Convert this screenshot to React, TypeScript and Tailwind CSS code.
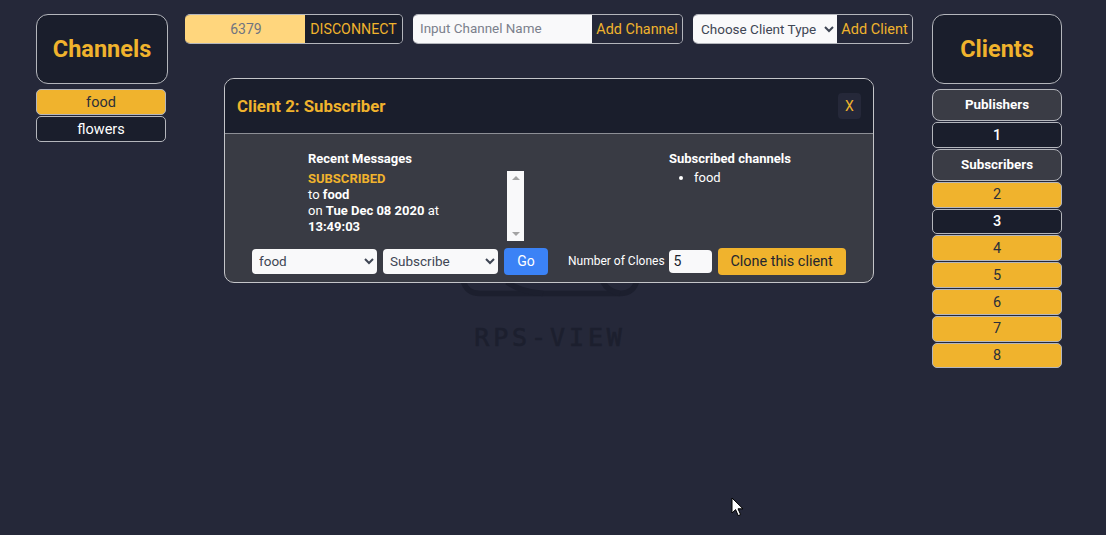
const panelBorder = 'border border-[#b4b6bc]';

const ListRow = ({name, active}: {name: string; active?: boolean}) => (
  <div
    className={`rounded-[5px] ${panelBorder} pt-[1px] flex items-center justify-center text-[14.5px] ${
      active ? 'bg-[#f0b32d] text-[#2b2f3a]' : 'bg-[#1a1e2c] text-white font-medium'
    } h-[25.8px]`}
  >
    {name}
  </div>
);

const GroupLabel = ({name}: {name: string}) => (
  <div className={`h-[32px] rounded-[8px] ${panelBorder} bg-[#3a3c45] text-white font-bold text-[13.4px] flex items-center justify-center`}>
    {name}
  </div>
);

const Title = ({text, className}: {text: string; className: string}) => (
  <div className={`h-[70px] rounded-[12px] ${panelBorder} bg-[#1a1e2c] text-[#f0b32d] font-bold text-[23.5px] pt-[2px] flex items-center justify-center ${className}`}>
    {text}
  </div>
);

const App = () => {
  return (
    <div
      className="relative w-[1106px] h-[535px] overflow-hidden bg-[#252839] flex items-start pl-[36px] pt-[14px]"
      style={{fontFamily: 'Roboto, "Liberation Sans", sans-serif'}}
    >
      {/* channels */}
      <div className="w-[132px] flex flex-col shrink-0">
        <Title text="Channels" className="w-[132px] mb-[5px]" />
        <div className="w-[130px] flex flex-col gap-px">
          <div className={`h-[26px] pt-px rounded-[5px] ${panelBorder} bg-[#f0b32d] text-[#2b2f3a] text-[14.5px] flex items-center justify-center`}>food</div>
          <div className={`h-[26px] pt-px rounded-[5px] ${panelBorder} bg-[#1a1e2c] text-white text-[14.5px] flex items-center justify-center`}>flowers</div>
        </div>
      </div>

      {/* center */}
      <div className="w-[728px] ml-[17px] shrink-0 flex flex-col">
        <div className="flex gap-[10px] h-[30px]">
          <div className={`w-[218px] flex rounded-[5px] overflow-hidden ${panelBorder} border-l-0 border-[#9a9ca4]`}>
            <div className="w-[120px] bg-[#ffd67d] text-[#6f7480] text-[14px] flex items-center justify-center pl-[2px]">6379</div>
            <div className="flex-1 bg-[#1a1e2c] text-[#f0b32d] text-[14.2px] pt-px flex items-center justify-center">DISCONNECT</div>
          </div>
          <div className={`w-[270px] flex rounded-[5px] overflow-hidden ${panelBorder} border-l-0 border-[#9a9ca4]`}>
            <input
              readOnly
              placeholder="Input Channel Name"
              className="w-[179px] bg-[#f9f9fa] text-[13.45px] pl-[7px] pt-px placeholder:text-[#7b808c] outline-none"
            />
            <div className="flex-1 bg-[#252839] text-[#f0b32d] text-[14.4px] pt-px flex items-center justify-center">Add Channel</div>
          </div>
          <div className={`w-[220px] flex rounded-[5px] overflow-hidden ${panelBorder} border-l-0 border-[#9a9ca4]`}>
            <select className="w-[144px] bg-[#f9f9fa] text-[#3f4654] text-[13.5px] pl-[4px] outline-none">
              <option>Choose Client Type</option>
            </select>
            <div className="flex-1 bg-[#252839] text-[#f0b32d] text-[14.5px] pt-px flex items-center justify-center">Add Client</div>
          </div>
        </div>

        {/* logo behind the modal */}
        <div className="flex flex-col items-center mt-[236px] ml-[2px]">
          <svg width="182" height="20" viewBox="0 0 182 20" fill="none" stroke="#1c1f2e" strokeWidth="5.5" className="block">
            <path d="M4 0c2 9 8 13.5 17 13.5h140c9 0 15-4.500 17-13.500" />
            <path d="M48 2c8 6 18 10 36 11.500" />
            <path d="M144 2c3 6 9 10 17 11.500" />
          </svg>
          <div
            className="mt-[21px] text-[#1c1f2e] text-[25px] leading-[34px] tracking-[3.9px] [-webkit-text-stroke:0.6px_#1c1f2e]"
            style={{fontFamily: '"DejaVu Sans Mono", monospace'}}
          >
            RPS-VIEW
          </div>
        </div>
      </div>

      {/* clients */}
      <div className="w-[130px] ml-[19px] shrink-0 flex flex-col">
        <Title text="Clients" className="mb-[5px]" />
        <div className="flex flex-col gap-px">
          <GroupLabel name="Publishers" />
          <ListRow name="1" />
          <GroupLabel name="Subscribers" />
          <ListRow name="2" active />
          <ListRow name="3" />
          <ListRow name="4" active />
          <ListRow name="5" active />
          <ListRow name="6" active />
          <ListRow name="7" active />
          <ListRow name="8" active />
        </div>
      </div>

      {/* modal */}
      <div className="absolute left-[224px] top-[78px] w-[650px] h-[205px] rounded-[10px] border border-[#c4c5c9] bg-[#393b44] overflow-hidden text-white">
        <div className="h-[55px] bg-[#1a1e2c] border-b border-[#8d8f96] flex items-center justify-between pl-[12px] pr-[12px]">
          <div className="text-[#f0b32d] font-bold text-[16.8px] pt-px">Client 2: Subscriber</div>
          <div className="w-[23px] h-[26px] rounded-[4px] bg-[#252839] text-[#f0b32d] text-[14px] pt-px flex items-center justify-center">X</div>
        </div>
        <div className="flex pt-[17px] h-[113px]">
          <div className="w-[83px] shrink-0" />
          <div className="w-[199px] shrink-0 text-[13px] leading-[16px] pr-[30px]">
            <div className="font-bold leading-[15px] mb-[5px]">Recent Messages</div>
            <div className="font-bold text-[#f0b32d]">SUBSCRIBED</div>
            <div>to <b>food</b></div>
            <div>on <b>Tue Dec 08 2020</b> at <b>13:49:03</b></div>
          </div>
          <div className="w-[17px] h-[70px] mt-[20px] bg-[#f9f9fa] shrink-0 flex flex-col justify-between items-center py-[5px]">
            <div className="w-0 h-0 border-x-[4px] border-x-transparent border-b-[4px] border-b-[#a3a3a3]" />
            <div className="w-0 h-0 border-x-[4px] border-x-transparent border-t-[4px] border-t-[#a3a3a3]" />
          </div>
          <div className="ml-[145px] text-[13px]">
            <div className="font-bold leading-[15px] mb-[4px]">Subscribed channels</div>
            <ul className="list-disc pl-[25px] leading-[15px]">
              <li>food</li>
            </ul>
          </div>
        </div>
        <div className="flex items-center pl-[27px] h-[28px]">
          <select className="w-[125px] h-[25px] rounded-[4px] bg-[#f9f9fa] text-[#3f4654] text-[13.5px] pl-[3px] outline-none">
            <option>food</option>
          </select>
          <select className="w-[115px] h-[25px] ml-[6px] rounded-[4px] bg-[#f9f9fa] text-[#3f4654] text-[13.5px] pl-[3px] outline-none">
            <option>Subscribe</option>
          </select>
          <div className="w-[44px] h-[27px] ml-[6px] rounded-[4px] bg-[#3b82f6] text-white text-[14px] flex items-center justify-center">Go</div>
          <div className="ml-[20px] text-[12px] whitespace-nowrap">Number of Clones</div>
          <input readOnly value="5" className="w-[43px] h-[23px] ml-[4px] rounded-[4px] bg-[#f9f9fa] text-[#1a1e2c] text-[14px] pl-[5px] outline-none" />
          <div className="w-[128px] h-[27px] ml-[6px] pt-px rounded-[4px] bg-[#f0b32d] text-[#23262f] text-[14.4px] flex items-center justify-center">Clone this client</div>
        </div>
      </div>

      {/* mouse pointer */}
      <svg className="absolute left-[731px] top-[497px]" width="14" height="22" viewBox="0 0 14 22">
        <path d="M1 1v15l3.6-3.4 2.6 6 2.4-1-2.6-5.8H12z" fill="#fff" stroke="#000" strokeWidth="1" />
      </svg>
    </div>
  );
};

export default App;
